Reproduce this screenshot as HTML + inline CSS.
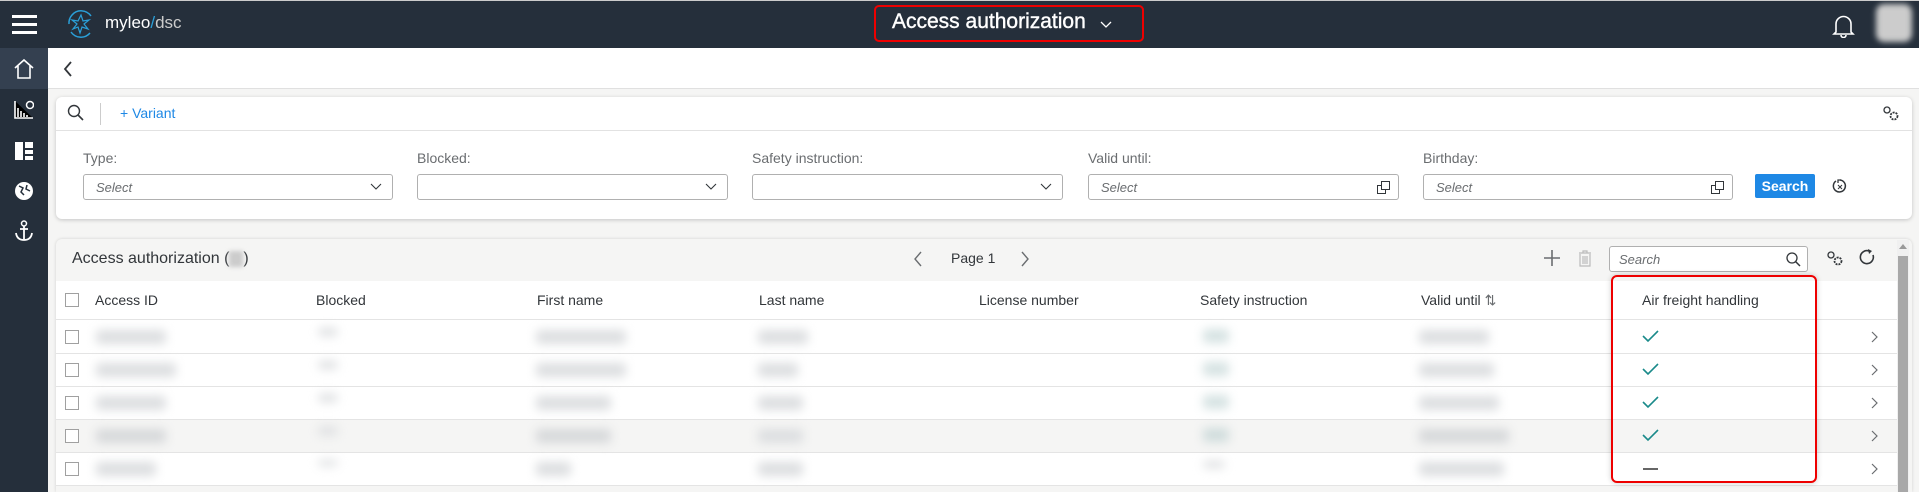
<!DOCTYPE html>
<html><head><meta charset="utf-8"><style>
*{box-sizing:border-box;margin:0;padding:0}
body{width:1919px;height:492px;overflow:hidden;background:#f5f5f4;font-family:"Liberation Sans",sans-serif;position:relative;color:#32363a}
.a{position:absolute}
.top{left:0;top:0;width:1919px;height:48px;background:#252f3b;border-top:1px solid #ccc}
.side{left:0;top:48px;width:48px;height:444px;background:#252f3b}
.lbl{font-size:14px;color:#6a6d70;top:150px}
.inp{top:174px;height:26px;border:1px solid #b0b0b0;border-radius:3px;background:#fff;font-size:13px;font-style:italic;color:#6a6d70;padding:5px 12px}
.dd{position:absolute;right:10px;top:8px}
.th{top:292px;font-size:14px;color:#32363a}
.row{left:56px;width:1841px;height:33px;border-bottom:1px solid #e4e4e4;background:#fff}
.cb{width:14px;height:14px;border:1.5px solid #a0a0a0;background:#fff}
.bl{height:14px;background:#dcdee0;filter:blur(5px);border-radius:4px}
</style></head><body>
<div class="a top"></div>
<div class="a" style="left:12px;top:15px;width:25px;height:3px;background:#fff;box-shadow:0 8px 0 #fff,0 16px 0 #fff"></div>
<svg class="a" style="left:66px;top:8px" width="30" height="32" viewBox="0 0 30 32"><path d="M6 7A12 12 0 0 1 25 8M24 25A12 12 0 0 1 5 24M3 16A12 12 0 0 1 6 7" stroke="#2a9fd8" stroke-width="1.5" fill="none"/><path d="M15 7L17 13L23 12L18 16L22 21L16 19L14 25L12 19L7 21L11 16L6 12L12 13Z" stroke="#2a9fd8" stroke-width="1.2" fill="none"/></svg>
<div class="a" style="left:105px;top:13px;font-size:17px;color:#fff">myleo<span style="color:#2a9fd8">/</span><span style="color:#ccc">dsc</span></div>
<div class="a" style="left:874px;top:5px;width:270px;height:37px;border:2px solid #e00;border-radius:5px"></div>
<div class="a" style="left:892px;top:10px;font-size:21px;color:#fff;-webkit-text-stroke:0.4px #fff">Access authorization</div>
<svg class="a" style="left:1100px;top:21px" width="12" height="8"><path d="M1 1L6 6L11 1" stroke="#fff" stroke-width="1.3" fill="none"/></svg>
<svg class="a" style="left:1832px;top:14px" width="23" height="24" viewBox="0 0 23 24"><path d="M4 18V10A7.5 7.5 0 0 1 19 10V18L21 20H2Z M9 21A2.5 2.5 0 0 0 14 21" stroke="#fff" stroke-width="1.6" fill="none"/></svg>
<div class="a" style="left:1876px;top:4px;width:36px;height:38px;background:#ccc;filter:blur(3px);border-radius:8px"></div>
<div class="a side"></div>
<div class="a" style="left:0;top:48px;width:48px;height:41px;background:#344050"></div>
<svg class="a" style="left:13px;top:58px" width="22" height="22" viewBox="0 0 22 22"><path d="M2 10L11 2L20 10M5 8V20H17V8" stroke="#fff" stroke-width="1.6" fill="none"/></svg>
<svg class="a" style="left:14px;top:100px" width="20" height="20"><path d="M1 1V18H19M4 17V8M7 17V11M10 17V13M13 17V15" stroke="#fff" stroke-width="1.6"/><circle cx="16" cy="5" r="3.5" stroke="#fff" stroke-width="1.5" fill="none"/></svg>
<svg class="a" style="left:15px;top:142px" width="18" height="18"><rect x="0" y="0" width="8" height="18" fill="#fff"/><rect x="10" y="0" width="8" height="6" fill="#fff"/><rect x="10" y="8" width="8" height="4" fill="#fff"/><rect x="10" y="14" width="8" height="4" fill="#fff"/></svg>
<svg class="a" style="left:14px;top:181px" width="20" height="20"><circle cx="10" cy="10" r="9" fill="#fff"/><path d="M5 5L9 7L7 11L10 14M13 4L12 8L16 10" stroke="#252f3b" stroke-width="1.5" fill="none"/></svg>
<svg class="a" style="left:14px;top:220px" width="20" height="22"><circle cx="10" cy="3.5" r="2.5" stroke="#fff" stroke-width="1.5" fill="none"/><path d="M10 6V20M6 9H14M2 13Q3 20 10 20Q17 20 18 13" stroke="#fff" stroke-width="1.8" fill="none"/></svg>
<div class="a" style="left:48px;top:48px;width:1871px;height:41px;background:#fff;border-bottom:1px solid #e0e0e0"></div>
<svg class="a" style="left:62px;top:60px" width="12" height="18"><path d="M9 2L3 9L9 16" stroke="#32363a" stroke-width="1.8" fill="none"/></svg>
<div class="a" style="left:56px;top:97px;width:1856px;height:122px;background:#fff;border-radius:6px;box-shadow:0 1px 4px rgba(0,0,0,.2)"></div>
<div class="a" style="left:56px;top:130px;width:1856px;height:1px;background:#e2e2e2"></div>
<svg class="a" style="left:67px;top:104px" width="18" height="18"><circle cx="7" cy="7" r="5.5" stroke="#32363a" stroke-width="1.4" fill="none"/><path d="M11 11L16 16" stroke="#32363a" stroke-width="1.6"/></svg>
<div class="a" style="left:100px;top:103px;width:1px;height:22px;background:#ccc"></div>
<div class="a" style="left:120px;top:105px;font-size:14px;color:#1e88e5">+ Variant</div>
<svg class="a" style="left:1882px;top:105px" width="18" height="16"><circle cx="5" cy="5" r="3" stroke="#32363a" stroke-width="1.3" fill="none"/><circle cx="12" cy="11" r="3.5" stroke="#32363a" stroke-width="1.8" stroke-dasharray="2 1" fill="none"/></svg>
<div class="a lbl" style="left:83px">Type:</div>
<div class="a lbl" style="left:417px">Blocked:</div>
<div class="a lbl" style="left:752px">Safety instruction:</div>
<div class="a lbl" style="left:1088px">Valid until:</div>
<div class="a lbl" style="left:1423px">Birthday:</div>
<div class="a inp" style="left:83px;width:310px">Select<svg class="dd" width="12" height="8"><path d="M1 1L6 6L11 1" stroke="#32363a" stroke-width="1.1" fill="none"/></svg></div>
<div class="a inp" style="left:417px;width:311px"><svg class="dd" width="12" height="8"><path d="M1 1L6 6L11 1" stroke="#32363a" stroke-width="1.1" fill="none"/></svg></div>
<div class="a inp" style="left:752px;width:311px"><svg class="dd" width="12" height="8"><path d="M1 1L6 6L11 1" stroke="#32363a" stroke-width="1.1" fill="none"/></svg></div>
<div class="a inp" style="left:1088px;width:311px">Select<svg style="position:absolute;right:8px;top:6px" width="13" height="13"><rect x="0.5" y="4.5" width="8" height="8" fill="none" stroke="#32363a"/><rect x="4.5" y="0.5" width="8" height="8" fill="#fff" stroke="#32363a"/></svg></div>
<div class="a inp" style="left:1423px;width:310px">Select<svg style="position:absolute;right:8px;top:6px" width="13" height="13"><rect x="0.5" y="4.5" width="8" height="8" fill="none" stroke="#32363a"/><rect x="4.5" y="0.5" width="8" height="8" fill="#fff" stroke="#32363a"/></svg></div>
<div class="a" style="left:1755px;top:174px;width:60px;height:24px;background:#1e88e5;border-radius:2px;color:#fff;font-weight:bold;font-size:14px;text-align:center;line-height:24px">Search</div>
<svg class="a" style="left:1832px;top:178px" width="16" height="16"><path d="M4 3A6 6 0 1 0 8 2" stroke="#32363a" stroke-width="1.5" fill="none"/><path d="M6 5L6 2H9" stroke="#32363a" stroke-width="1.3" fill="none"/><path d="M6 7L10 11M10 7L6 11" stroke="#32363a" stroke-width="1"/></svg>
<div class="a" style="left:56px;top:239px;width:1856px;height:253px;background:#f5f5f4;border-radius:6px 6px 0 0;box-shadow:0 0 3px rgba(0,0,0,.15)"></div>
<div class="a" style="left:72px;top:250px;font-size:16px">Access authorization (<span style="display:inline-block;width:14px;height:16px;background:#ccc;filter:blur(2px);vertical-align:middle"></span>)</div>
<svg class="a" style="left:913px;top:251px" width="10" height="16"><path d="M8 1L2 8L8 15" stroke="#6a6d70" stroke-width="1.4" fill="none"/></svg>
<div class="a" style="left:951px;top:250px;font-size:14px">Page 1</div>
<svg class="a" style="left:1020px;top:251px" width="10" height="16"><path d="M2 1L8 8L2 15" stroke="#6a6d70" stroke-width="1.4" fill="none"/></svg>
<svg class="a" style="left:1544px;top:250px" width="16" height="16"><path d="M8 0V16M0 8H16" stroke="#6a6d70" stroke-width="1.6"/></svg>
<svg class="a" style="left:1578px;top:250px" width="14" height="17"><path d="M1 3H13M5 3V1H9V3M2 4V16H12V4M5 6V14M7 6V14M9 6V14" stroke="#bbb" stroke-width="1.2" fill="none"/></svg>
<div class="a" style="left:1609px;top:246px;width:199px;height:26px;border:1px solid #b0b0b0;border-radius:3px;background:#fff;font-size:13px;font-style:italic;color:#6a6d70;padding:5px 9px">Search<svg style="position:absolute;right:6px;top:5px" width="15" height="15"><circle cx="6" cy="6" r="5" stroke="#32363a" stroke-width="1.3" fill="none"/><path d="M9.5 9.5L14 14" stroke="#32363a" stroke-width="1.5"/></svg></div>
<svg class="a" style="left:1826px;top:250px" width="18" height="16"><circle cx="5" cy="5" r="3" stroke="#32363a" stroke-width="1.3" fill="none"/><circle cx="12" cy="11" r="3.5" stroke="#32363a" stroke-width="1.8" stroke-dasharray="2 1" fill="none"/></svg>
<svg class="a" style="left:1859px;top:249px" width="17" height="17"><path d="M10 2A6.5 6.5 0 1 0 14 6" stroke="#32363a" stroke-width="1.6" fill="none"/><path d="M9 0L13 2L10 5Z" fill="#32363a"/></svg>
<div class="a" style="left:56px;top:281px;width:1841px;height:39px;background:#fff;border-bottom:1px solid #e4e4e4"></div>
<div class="a cb" style="left:65px;top:293px"></div>
<div class="a th" style="left:95px">Access ID</div>
<div class="a th" style="left:316px">Blocked</div>
<div class="a th" style="left:537px">First name</div>
<div class="a th" style="left:759px">Last name</div>
<div class="a th" style="left:979px">License number</div>
<div class="a th" style="left:1200px">Safety instruction</div>
<div class="a th" style="left:1421px">Valid until <span style="color:#6a6d70">&#8645;</span></div>
<div class="a th" style="left:1642px">Air freight handling</div>
<div class="a row" style="top:320px;height:34px"></div>
<div class="a row" style="top:354px"></div>
<div class="a row" style="top:387px"></div>
<div class="a row" style="top:420px;background:#f5f5f4"></div>
<div class="a row" style="top:453px"></div>
<div class="a cb" style="left:65px;top:330px"></div><div class="a cb" style="left:65px;top:363px"></div><div class="a cb" style="left:65px;top:396px"></div><div class="a cb" style="left:65px;top:429px"></div><div class="a cb" style="left:65px;top:462px"></div>
<div class="a bl" style="left:96px;top:330px;width:70px"></div><div class="a bl" style="left:318px;top:328px;width:20px;height:8px"></div><div class="a bl" style="left:536px;top:330px;width:90px"></div><div class="a bl" style="left:758px;top:330px;width:50px"></div><div class="a bl" style="left:1203px;top:329px;width:26px;background:#d5e2e2"></div><div class="a bl" style="left:1419px;top:330px;width:70px"></div>
<div class="a bl" style="left:96px;top:363px;width:80px"></div><div class="a bl" style="left:318px;top:361px;width:20px;height:8px"></div><div class="a bl" style="left:536px;top:363px;width:90px"></div><div class="a bl" style="left:758px;top:363px;width:40px"></div><div class="a bl" style="left:1203px;top:362px;width:26px;background:#d5e2e2"></div><div class="a bl" style="left:1419px;top:363px;width:75px"></div>
<div class="a bl" style="left:96px;top:396px;width:70px"></div><div class="a bl" style="left:318px;top:394px;width:20px;height:8px"></div><div class="a bl" style="left:536px;top:396px;width:75px"></div><div class="a bl" style="left:758px;top:396px;width:45px"></div><div class="a bl" style="left:1203px;top:395px;width:26px;background:#d5e2e2"></div><div class="a bl" style="left:1419px;top:396px;width:80px"></div>
<div class="a bl" style="left:96px;top:429px;width:70px;background:#d6d8da"></div><div class="a bl" style="left:318px;top:427px;width:20px;height:8px"></div><div class="a bl" style="left:536px;top:429px;width:75px;background:#d6d8da"></div><div class="a bl" style="left:758px;top:429px;width:45px"></div><div class="a bl" style="left:1203px;top:428px;width:26px;background:#cfdcdc"></div><div class="a bl" style="left:1419px;top:429px;width:90px;background:#d6d8da"></div>
<div class="a bl" style="left:96px;top:462px;width:60px"></div><div class="a bl" style="left:318px;top:460px;width:20px;height:6px"></div><div class="a bl" style="left:536px;top:462px;width:35px"></div><div class="a bl" style="left:758px;top:462px;width:45px"></div><div class="a bl" style="left:1203px;top:461px;width:22px;height:7px"></div><div class="a bl" style="left:1419px;top:462px;width:85px"></div>
<svg class="a" style="left:1642px;top:330px" width="17" height="13"><path d="M1 6L6 11L16 1" stroke="#1a8a8a" stroke-width="1.6" fill="none"/></svg>
<svg class="a" style="left:1642px;top:363px" width="17" height="13"><path d="M1 6L6 11L16 1" stroke="#1a8a8a" stroke-width="1.6" fill="none"/></svg>
<svg class="a" style="left:1642px;top:396px" width="17" height="13"><path d="M1 6L6 11L16 1" stroke="#1a8a8a" stroke-width="1.6" fill="none"/></svg>
<svg class="a" style="left:1642px;top:429px" width="17" height="13"><path d="M1 6L6 11L16 1" stroke="#1a8a8a" stroke-width="1.6" fill="none"/></svg>
<div class="a" style="left:1643px;top:468px;width:15px;height:2px;background:#666"></div>
<div class="a" style="left:1611px;top:275px;width:206px;height:208px;border:2px solid #e00;border-radius:6px;box-shadow:0 0 6px rgba(0,0,0,.2)"></div>
<svg class="a" style="left:1871px;top:331px" width="8" height="130"><g stroke="#6a6d70" stroke-width="1.2" fill="none"><path d="M1 1L6 6L1 11"/><path d="M1 34L6 39L1 44"/><path d="M1 67L6 72L1 77"/><path d="M1 100L6 105L1 110"/></g></svg>
<svg class="a" style="left:1871px;top:463px" width="8" height="14"><path d="M1 1L6 6L1 11" stroke="#6a6d70" stroke-width="1.2" fill="none"/></svg>
<div class="a" style="left:1897px;top:240px;width:12px;height:252px;background:#f0f0f0"></div>
<div class="a" style="left:1898px;top:256px;width:10px;height:236px;background:#a8a8a8"></div>
<div class="a" style="left:1899px;top:244px;width:0;height:0;border-left:4px solid transparent;border-right:4px solid transparent;border-bottom:5px solid #999"></div>
</body></html>
